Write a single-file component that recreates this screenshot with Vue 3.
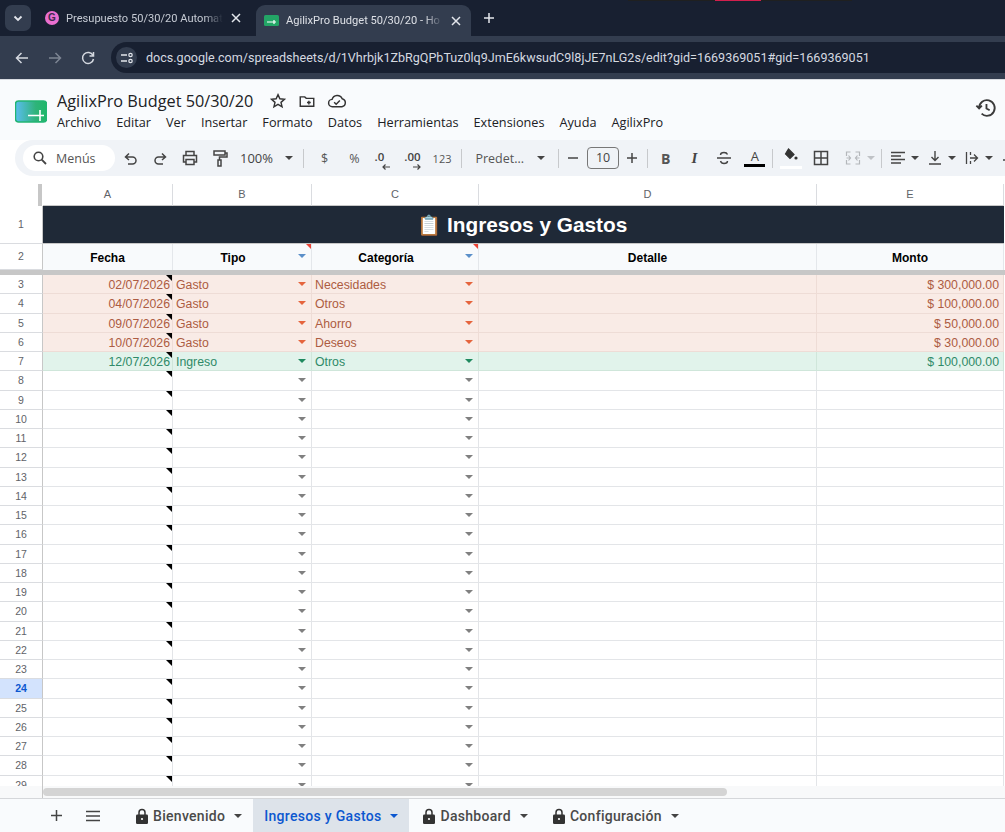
<script setup>
const menus = ['Archivo', 'Editar', 'Ver', 'Insertar', 'Formato', 'Datos', 'Herramientas', 'Extensiones', 'Ayuda', 'AgilixPro']

const filled = {
  3: { kind: 'out', date: '02/07/2026', type: 'Gasto', cat: 'Necesidades', amount: '$ 300,000.00' },
  4: { kind: 'out', date: '04/07/2026', type: 'Gasto', cat: 'Otros', amount: '$ 100,000.00' },
  5: { kind: 'out', date: '09/07/2026', type: 'Gasto', cat: 'Ahorro', amount: '$ 50,000.00' },
  6: { kind: 'out', date: '10/07/2026', type: 'Gasto', cat: 'Deseos', amount: '$ 30,000.00' },
  7: { kind: 'in', date: '12/07/2026', type: 'Ingreso', cat: 'Otros', amount: '$ 100,000.00' },
}

const rows = []
for (let n = 3; n <= 29; n++) {
  rows.push({ n, kind: 'none', date: '', type: '', cat: '', amount: '', ...filled[n] })
}

const sheets = [
  { name: 'Bienvenido', locked: true },
  { name: 'Ingresos y Gastos', locked: false, active: true },
  { name: 'Dashboard', locked: true },
  { name: 'Configuración', locked: true },
]
</script>

<template>
  <div class="page">
    <div class="tabstrip">
      <div class="top-mark"><span></span></div>
      <button class="tab-search">
        <svg width="12" height="12" viewBox="0 0 12 12"><path d="M2.5 4.5 6 8l3.5-3.5" fill="none" stroke="#e3e6ec" stroke-width="1.8"/></svg>
      </button>
      <div class="tab">
        <span class="fav-g">G</span>
        <span class="tab-title">Presupuesto 50/30/20 Automat</span>
        <svg class="tab-x" width="12" height="12" viewBox="0 0 12 12"><path d="M2 2l8 8M10 2l-8 8" stroke="#e3e6ec" stroke-width="1.5"/></svg>
      </div>
      <div class="tab tab-on">
        <svg width="15" height="11" viewBox="0 0 15 11"><rect width="15" height="11" rx="1.5" fill="#23a566"/><path d="M3 7h9M10 5v4" stroke="#fff" stroke-width="1.2" fill="none"/></svg>
        <span class="tab-title">AgilixPro Budget 50/30/20 - Ho</span>
        <svg class="tab-x" width="12" height="12" viewBox="0 0 12 12"><path d="M2 2l8 8M10 2l-8 8" stroke="#e3e6ec" stroke-width="1.5"/></svg>
      </div>
      <svg class="new-tab" width="12" height="12" viewBox="0 0 12 12"><path d="M6 1v10M1 6h10" stroke="#e3e6ec" stroke-width="1.5"/></svg>
    </div>

    <div class="addressbar">
      <svg width="16" height="16" viewBox="0 0 16 16"><path d="M14 8H3M7.500 3 2.500 8l5 5" fill="none" stroke="#d5d9e0" stroke-width="1.500"/></svg>
      <svg width="16" height="16" viewBox="0 0 16 16"><path d="M2 8h11M8.500 3l5 5-5 5" fill="none" stroke="#7d8593" stroke-width="1.500"/></svg>
      <svg width="16" height="16" viewBox="0 0 16 16"><path d="M13 5.500A5.500 5.500 0 1 0 13.500 9M13.500 2v4h-4" fill="none" stroke="#d5d9e0" stroke-width="1.500"/></svg>
      <div class="omnibox">
        <span class="site-btn">
          <svg width="14" height="14" viewBox="0 0 14 14"><path d="M1 4h6M1 10h6" stroke="#e3e6ec" stroke-width="1.300"/><circle cx="10.500" cy="4" r="1.700" fill="none" stroke="#e3e6ec" stroke-width="1.200"/><circle cx="10.500" cy="10" r="1.700" fill="none" stroke="#e3e6ec" stroke-width="1.200"/></svg>
        </span>
        <span class="url">docs.google.com/spreadsheets/d/1Vhrbjk1ZbRgQPbTuz0lq9JmE6kwsudC9l8jJE7nLG2s/edit?gid=1669369051#gid=1669369051</span>
      </div>
    </div>

    <div class="docs-head">
      <svg class="doc-logo" width="32" height="23" viewBox="0 0 32 23">
        <defs><linearGradient id="lg" x1="0" x2="1"><stop offset="0" stop-color="#5bbdf0"/><stop offset="0.65" stop-color="#2fb37a"/><stop offset="1" stop-color="#1fb868"/></linearGradient></defs>
        <rect width="31" height="21" x="0.500" y="1" rx="3" fill="url(#lg)" stroke="#22b573" stroke-width="1.500"/>
        <path d="M13 15.500h16M25 10v11" stroke="#fff" stroke-width="1.600" fill="none"/>
      </svg>
      <div class="doc-info">
        <div class="doc-title-row">
          <span class="doc-title">AgilixPro Budget 50/30/20</span>
          <svg width="18" height="18" viewBox="0 0 24 24"><path d="M12 3.500l2.500 5.600 6.100.6-4.600 4.100 1.400 6-5.400-3.200-5.400 3.200 1.400-6-4.600-4.100 6.100-.6z" fill="none" stroke="#333" stroke-width="1.900"/></svg>
          <svg width="18" height="18" viewBox="0 0 24 24"><path d="M3 6.500h6l2 2h10v10.500H3zM12 14h5M14.500 11.500v5" fill="none" stroke="#333" stroke-width="1.900"/></svg>
          <svg width="20" height="18" viewBox="0 0 24 22"><path d="M6.500 18a4.500 4.500 0 0 1-.5-9 6.500 6.500 0 0 1 12.300-.8A5 5 0 0 1 18 18zM8.500 12.500l2.500 2.500 4.500-4.500" fill="none" stroke="#333" stroke-width="1.800"/></svg>
        </div>
        <nav class="menus"><span v-for="m in menus" :key="m">{{ m }}</span></nav>
      </div>
      <svg class="history" width="22" height="22" viewBox="0 0 24 24"><path d="M4.500 12a8.500 8.500 0 1 1 2.700 6.200M1.500 9.500l3 3 3-3M12.500 7.500V12.500l3.500 2" fill="none" stroke="#3a3a3a" stroke-width="2"/></svg>
    </div>

    <div class="toolbar">
      <div class="menu-search">
        <svg width="16" height="16" viewBox="0 0 16 16"><circle cx="6.500" cy="6.500" r="4.300" fill="none" stroke="#444" stroke-width="1.600"/><path d="M9.700 9.700 14 14" stroke="#444" stroke-width="1.800"/></svg>
        <span>Menús</span>
      </div>
      <svg class="tb ml4" width="16" height="16" viewBox="0 0 16 16"><path d="M6 3.500 2.500 7 6 10M3 7h6.500a3.500 3.500 0 0 1 0 7H5" fill="none" stroke="#444" stroke-width="1.500"/></svg>
      <svg class="tb" width="16" height="16" viewBox="0 0 16 16"><path d="M10 3.500 13.500 7 10 10M13 7H6.500a3.500 3.500 0 0 0 0 7H11" fill="none" stroke="#444" stroke-width="1.500"/></svg>
      <svg class="tb" width="18" height="18" viewBox="0 0 18 18"><path d="M5 6V2.500h8V6M5 13H2.500V6.500h13V13H13M5 10.500h8v5H5z" fill="none" stroke="#444" stroke-width="1.500"/></svg>
      <svg class="tb tb-paint" width="16" height="18" viewBox="0 0 16 18"><path d="M2 2h11v4H2zM13 4h2v4H7.500v3M6 11h3v6H6z" fill="none" stroke="#444" stroke-width="1.500"/></svg>
      <span class="zoom-val">100%</span><i class="caret zoom-caret"></i>
      <span class="sep"></span>
      <span class="fmt w-dollar">$</span>
      <span class="fmt w-pct">%</span>
      <span class="dec dec1"><span>.0</span><svg width="8" height="6" viewBox="0 0 8 6"><path d="M8 3H1M3.500.5 1 3l2.500 2.500" fill="none" stroke="#444" stroke-width="1.200"/></svg></span>
      <span class="dec dec2"><span>.00</span><svg width="8" height="6" viewBox="0 0 8 6"><path d="M0 3h7M4.500.5 7 3 4.500 5.500" fill="none" stroke="#444" stroke-width="1.200"/></svg></span>
      <span class="fmt-123">123</span>
      <span class="sep"></span>
      <span class="font-name">Predet...</span><i class="caret font-caret"></i>
      <span class="sep sep-font"></span>
      <svg class="size-btn" width="12" height="12" viewBox="0 0 12 12"><path d="M1 6h10" stroke="#444" stroke-width="1.500"/></svg>
      <span class="size-box">10</span>
      <svg class="size-btn" width="12" height="12" viewBox="0 0 12 12"><path d="M1 6h10M6 1v10" stroke="#444" stroke-width="1.500"/></svg>
      <span class="sep sep-size"></span>
      <b class="t-bold">B</b>
      <i class="t-italic">I</i>
      <svg class="t-strike" width="16" height="16" viewBox="0 0 16 16"><path d="M1 8h14M11.500 4.500C11 3 9.500 2.500 8 2.500s-3.500.6-3.500 2.500M4.500 11c.5 1.700 2 2.500 3.500 2.500s3.500-.8 3.500-2.500" fill="none" stroke="#444" stroke-width="1.400"/></svg>
      <span class="t-color">A</span>
      <span class="sep sep-color"></span>
      <span class="fill">
        <svg width="18" height="14" viewBox="0 0 18 14"><path d="M6.500 1l5.500 5.500-4 4-4.500-4.500zM3.500 6.500h8" fill="#333" stroke="#333" stroke-width="1.200"/><circle cx="14" cy="10" r="1.600" fill="#333"/></svg>
      </span>
      <svg class="tb-borders" width="16" height="16" viewBox="0 0 16 16"><path d="M1.500 1.500h13v13h-13zM8 1.500v13M1.500 8h13" fill="none" stroke="#444" stroke-width="1.500"/></svg>
      <svg class="tb-merge" width="16" height="16" viewBox="0 0 16 16"><path d="M1.500 6V2h4M10.500 2h4v4M1.500 10v4h4M10.500 14h4v-4M1.500 8h4M10.500 8h4M3.500 5.500 5.500 8 3.500 10.500M12.500 5.500 10.500 8l2 2.500" fill="none" stroke="#b4b7bb" stroke-width="1.200"/></svg>
      <i class="caret pale"></i>
      <span class="sep sep-merge"></span>
      <svg class="tb-lines" width="14" height="14" viewBox="0 0 14 14"><path d="M0 1.500h14M0 5h10M0 8.500h14M0 12h10" stroke="#444" stroke-width="1.300"/></svg>
      <i class="caret"></i>
      <svg class="tb-lines" width="14" height="14" viewBox="0 0 14 14"><path d="M7 0v9M3.500 6 7 9.500 10.500 6M1 13h12" fill="none" stroke="#444" stroke-width="1.400"/></svg>
      <i class="caret"></i>
      <svg class="tb-lines" width="14" height="14" viewBox="0 0 14 14"><path d="M1.500 1v12M12.500 7H5M9 3.500 12.500 7 9 10.500M5.500 1v3M5.500 10v3" fill="none" stroke="#444" stroke-width="1.300"/></svg>
      <i class="caret"></i>
      <svg class="tb-lines" width="14" height="14" viewBox="0 0 14 14"><path d="M1 9h8" stroke="#444" stroke-width="1.300"/></svg>
    </div>

    <div class="sheet">
      <div class="grid">
        <div class="corner"></div>
        <div class="col-head" v-for="c in ['A', 'B', 'C', 'D', 'E']" :key="c">{{ c }}</div>
        <div class="rail"></div>

        <div class="row-no r1">1</div>
        <div class="banner"><span class="clip">📋</span> Ingresos y Gastos</div>
        <div class="rail"></div>

        <div class="row-no r2">2</div>
        <div class="hd">Fecha</div>
        <div class="hd note">Tipo<i class="arrow blue"></i></div>
        <div class="hd note">Categoría<i class="arrow blue"></i></div>
        <div class="hd">Detalle</div>
        <div class="hd">Monto</div>
        <div class="rail"></div>

        <div class="freeze"></div>

        <template v-for="r in rows" :key="r.n">
          <div class="row-no" :class="{ selected: r.n === 24 }">{{ r.n }}</div>
          <div class="cell date" :class="r.kind">{{ r.date }}<i class="tick"></i></div>
          <div class="cell" :class="r.kind">{{ r.type }}<i class="arrow"></i></div>
          <div class="cell" :class="r.kind">{{ r.cat }}<i class="arrow"></i></div>
          <div class="cell" :class="r.kind"></div>
          <div class="cell amount" :class="r.kind">{{ r.amount }}</div>
          <div class="rail"></div>
        </template>
      </div>
    </div>

    <div class="hscroll">
      <div class="hscroll-left"></div>
      <div class="hscroll-track"><div class="hscroll-thumb"></div></div>
    </div>

    <div class="sheetbar">
      <svg class="bar-icon add" width="13" height="13" viewBox="0 0 13 13"><path d="M6.500 1v11M1 6.500h11" stroke="#444" stroke-width="1.500"/></svg>
      <svg class="bar-icon all" width="14" height="12" viewBox="0 0 14 12"><path d="M0 1.500h14M0 6h14M0 10.500h14" stroke="#444" stroke-width="1.500"/></svg>
      <div v-for="s in sheets" :key="s.name" class="sheet-tab" :class="{ active: s.active }">
        <svg v-if="s.locked" width="12" height="16" viewBox="0 0 12 16"><path d="M3 7V4.500a3 3 0 0 1 6 0V7" fill="none" stroke="#333" stroke-width="1.500"/><rect y="6.500" width="12" height="9.500" rx="1.200" fill="#333"/><circle cx="6" cy="11" r="1.100" fill="#fff"/></svg>
        <span>{{ s.name }}</span>
        <i class="caret"></i>
      </div>
    </div>
  </div>
</template>

<style scoped>
.page {
  width: 1005px;
  height: 832px;
  overflow: hidden;
  display: flex;
  flex-direction: column;
  background: #fff;
  font-family: "Open Sans", sans-serif;
}

.tabstrip {
  height: 36px;
  flex: none;
  background: #182031;
  display: flex;
  align-items: center;
  padding-left: 5px;
  position: relative;
}

.top-mark {
  position: absolute;
  left: 628px;
  top: 0;
  width: 224px;
  height: 1px;
  background: #1f2020;
}

.top-mark span {
  position: absolute;
  left: 87px;
  top: 0;
  width: 46px;
  height: 1px;
  background: #d21f4d;
}

.tab-search {
  width: 26px;
  height: 26px;
  border: 0;
  padding: 0;
  border-radius: 7px;
  background: #333d4f;
  display: flex;
  align-items: center;
  justify-content: center;
  flex: none;
}

.tab {
  width: 225px;
  height: 36px;
  flex: none;
  display: flex;
  align-items: center;
  gap: 7px;
  padding: 0 14px;
  box-sizing: border-box;
  color: #c6cbd4;
  font-size: 11.100px;
  font-family: Roboto, sans-serif;
}

.tab-title {
  flex: 1;
  min-width: 0;
  white-space: nowrap;
  -webkit-mask-image: linear-gradient(90deg, #000 88%, transparent);
  mask-image: linear-gradient(90deg, #000 88%, transparent);
}

.tab-on {
  width: 215px;
  margin-top: 5px;
  height: 31px;
  background: #333d4f;
  border-radius: 9px 9px 0 0;
  padding: 0 9px 0 8px;
  color: #dde0e6;
}

.fav-g {
  width: 14px;
  height: 14px;
  border-radius: 50%;
  background: #ea6fd0;
  color: #3b2a4c;
  font: 700 10px/14px "Liberation Sans", sans-serif;
  text-align: center;
  flex: none;
}

.tab-x {
  flex: none;
}

.new-tab {
  margin-left: 12px;
}

.addressbar {
  height: 44px;
  flex: none;
  background: #333d4f;
  display: flex;
  align-items: center;
  gap: 17px;
  padding-left: 14px;
  border-bottom: 1px solid #d8dbe0;
  box-sizing: border-box;
}

.omnibox {
  flex: 1;
  height: 31px;
  margin-left: -2px;
  background: #182031;
  border-radius: 16px 0 0 16px;
  display: flex;
  align-items: center;
  gap: 9px;
  padding-left: 5px;
}

.site-btn {
  width: 21px;
  height: 21px;
  border-radius: 50%;
  background: #333d4f;
  display: flex;
  align-items: center;
  justify-content: center;
}

.url {
  color: #d5d9e0;
  font-family: Roboto, sans-serif;
  font-size: 12.560px;
  white-space: nowrap;
}

.docs-head {
  height: 60px;
  flex: none;
  background: #f9fbfd;
  display: flex;
  align-items: flex-start;
  padding-left: 15px;
  box-sizing: border-box;
}

.doc-logo {
  margin-top: 20px;
  flex: none;
}

.doc-info {
  margin-left: 10px;
  padding-top: 9px;
}

.doc-title-row {
  display: flex;
  align-items: center;
  gap: 11px;
  height: 24px;
}

.doc-title {
  font-size: 16.250px;
  color: #202124;
  margin-right: 5px;
}

.menus {
  display: flex;
  gap: 15px;
  font-size: 12.700px;
  color: #202124;
}

.history {
  margin-left: auto;
  margin-right: 8px;
  margin-top: 17px;
}

.toolbar {
  height: 36px;
  flex: none;
  margin: 0 0 0 15px;
  background: #f0f3f7;
  border-radius: 18px 0 0 18px;
  display: flex;
  align-items: center;
  color: #444;
  padding-left: 8px;
  white-space: nowrap;
  overflow: hidden;
}

.menu-search {
  width: 92px;
  height: 26px;
  background: #fff;
  border-radius: 13px;
  display: flex;
  align-items: center;
  gap: 8px;
  padding-left: 9px;
  box-sizing: border-box;
  font-size: 12.500px;
  color: #555;
  flex: none;
}

.tb {
  margin-right: 13px;
  flex: none;
}

.tb-paint {
  margin-right: 11px;
}

.ml4 {
  margin-left: 8px;
}

.zoom-val {
  font-size: 13px;
  margin-left: 1px;
}

.caret {
  display: inline-block;
  width: 0;
  height: 0;
  border-left: 4px solid transparent;
  border-right: 4px solid transparent;
  border-top: 4px solid #444;
  flex: none;
}

.caret.pale {
  border-top-color: #bfc2c6;
  margin-left: 6px;
}

.zoom-caret {
  margin-left: 12px;
}

.sep {
  width: 1px;
  height: 19px;
  background: #c7c9cc;
  flex: none;
  margin: 0 10px;
}

.sep-font {
  margin: 0 8px 0 13px;
}

.sep-size {
  margin: 0 10px 0 3px;
}

.sep-color {
  margin: 0 7px 0 7px;
}

.sep-merge {
  margin: 0 9px 0 6px;
}

.fmt {
  font-size: 12.500px;
  color: #555;
}

.w-dollar {
  margin-left: 7px;
  margin-right: 21px;
}

.w-pct {
  margin-right: 15px;
}

.dec {
  font: 600 11.500px/12px "Open Sans", sans-serif;
  display: inline-flex;
  flex-direction: column;
  align-items: flex-end;
  padding-top: 4px;
  flex: none;
}

.dec svg {
  margin-top: 1px;
  display: block;
}

.dec1 {
  margin-right: 14px;
}

.dec1 span {
  margin-right: 6px;
}

.dec2 {
  margin-right: 12px;
}

.fmt-123 {
  font-size: 11px;
  color: #555;
}

.font-name {
  font-size: 12.500px;
  color: #555;
  margin-left: 3px;
}

.font-caret {
  margin-left: 13px;
}

.size-btn {
  flex: none;
  margin: 0 6px 0 0;
}

.size-box {
  width: 32px;
  height: 22px;
  border: 1px solid #777;
  border-radius: 4px;
  box-sizing: border-box;
  text-align: center;
  font-size: 12.500px;
  line-height: 20px;
  margin-right: 7px;
  margin-left: 2px;
  flex: none;
}

.t-bold {
  font: 700 14px "Open Sans", sans-serif;
  margin: 0 21px 0 3px;
  color: #555;
}

.t-italic {
  font: italic 700 15px "Liberation Serif", serif;
  margin-right: 19px;
}

.t-strike {
  margin-right: 12px;
  flex: none;
}

.t-color {
  font-size: 13px;
  line-height: 15px;
  width: 21px;
  text-align: center;
  border-bottom: 3px solid #000;
  flex: none;
}

.fill {
  border-bottom: 3px solid #fff;
  height: 18px;
  width: 22px;
  flex: none;
  display: flex;
  justify-content: center;
}

.tb-borders {
  margin-left: 11px;
  margin-right: 16px;
  flex: none;
}

.tb-merge {
  flex: none;
}

.tb-lines {
  flex: none;
  margin-right: 6px;
}

.toolbar > .caret + .tb-lines {
  margin-left: 9px;
}

.sheet {
  margin-top: 8px;
  height: 602px;
  flex: none;
  overflow: hidden;
}

.grid {
  display: grid;
  grid-template-columns: 43px 130px 139px 167px 338px 187px 1px;
  grid-template-rows: 22px 38px 26px 5px;
  grid-auto-rows: 19.250px;
  font-family: "Liberation Sans", sans-serif;
  font-size: 12.300px;
}

.corner {
  border-right: 4px solid #c7c7c7;
  border-bottom: 1px solid #c7c7c7;
  margin: 0 1px 0 38px;
}

.col-head {
  box-sizing: border-box;
  border-right: 1px solid #dadce0;
  border-bottom: 1px solid #c7c7c7;
  color: #5f6368;
  font-size: 11px;
  text-align: center;
  line-height: 21px;
}

.rail {
  background: #fff;
}

.row-no {
  color: #5f6368;
  font-size: 10.500px;
  text-align: center;
  line-height: 18px;
  border-right: 1px solid #c7c7c7;
  border-bottom: 1px solid #dadce0;
  box-sizing: border-box;
}

.row-no.selected {
  background: #d3e3fd;
  color: #0b57d0;
  font-weight: 700;
}

.r1 {
  line-height: 37px;
}

.row-no.r2 {
  line-height: 25px;
}

.banner {
  grid-column: 2 / span 5;
  background: #1f2937;
  color: #fff;
  font-size: 20.800px;
  font-weight: 700;
  display: flex;
  align-items: center;
  justify-content: center;
  gap: 5px;
  padding: 1px 2px 0 0;
  border-bottom: 1px solid #c7c7c7;
  box-sizing: border-box;
}

.clip {
  font-size: 19.500px;
  font-family: "Noto Color Emoji", "Liberation Sans", sans-serif;
}

.hd {
  background: #f8fafc;
  border-right: 1px solid #e4e7eb;
  box-sizing: border-box;
  font-size: 12px;
  font-weight: 700;
  color: #000;
  text-align: center;
  line-height: 28px;
  position: relative;
}

.hd.note {
  padding-right: 18px;
}

.hd.note::after {
  content: "";
  position: absolute;
  right: 0;
  top: 0;
  border-top: 5px solid #ea4335;
  border-left: 5px solid transparent;
}

.freeze {
  grid-column: 1 / -1;
  background: #c7c7c7;
}

.cell {
  position: relative;
  box-sizing: border-box;
  border-right: 1px solid #e3e5e8;
  border-bottom: 1px solid #e3e5e8;
  padding: 0 2px 0 3px;
  line-height: 20px;
  white-space: nowrap;
}

.cell.out {
  background: #f9ebe6;
  color: #ad5c42;
  border-color: #eedcd6;
}

.cell.in {
  background: #e1f3eb;
  color: #2f8a68;
  border-color: #cfe6da;
}

.date,
.amount {
  text-align: right;
}

.cell.amount {
  padding-right: 4px;
}

.tick {
  position: absolute;
  right: 0;
  top: 0;
  border-top: 6px solid #000;
  border-left: 6px solid transparent;
}

.arrow {
  position: absolute;
  right: 5px;
  top: 7px;
  border-left: 4px solid transparent;
  border-right: 4px solid transparent;
  border-top: 4px solid #808080;
}

.out .arrow {
  border-top-color: #e5643d;
}

.in .arrow {
  border-top-color: #1f8a5f;
}

.arrow.blue {
  border-top-color: #5b8fc9;
  top: 10px;
}

.hscroll {
  height: 12px;
  flex: none;
  display: flex;
  background: #f8f9fa;
}

.hscroll-left {
  width: 43px;
  border-right: 1px solid #c7c7c7;
  box-sizing: border-box;
}

.hscroll-track {
  flex: 1;
  padding: 2px 0;
  box-sizing: border-box;
}

.hscroll-thumb {
  width: 684px;
  height: 8px;
  border-radius: 4px;
  background: #d4d4d4;
}

.sheetbar {
  flex: 1;
  background: #f9fbfd;
  border-top: 1px solid #d5d7da;
  display: flex;
  align-items: stretch;
  font-family: Roboto, sans-serif;
  font-size: 14px;
  font-weight: 500;
  letter-spacing: 0.3px;
  color: #4a4a4a;
}

.bar-icon {
  align-self: center;
  flex: none;
}

.add {
  margin-left: 50px;
}

.all {
  margin-left: 23px;
  margin-right: 22px;
}

.sheet-tab {
  display: flex;
  align-items: center;
  gap: 5px;
  padding: 0 11px 0 14px;
}

.sheet-tab .caret {
  margin-left: 4px;
}

.sheet-tab.active {
  background: #dde3ea;
  color: #0b57d0;
  padding: 0 11px 0 11px;
}

.sheet-tab.active .caret {
  border-top-color: #0b57d0;
}
</style>

<style>
body {
  margin: 0;
  overflow: hidden;
}
</style>
